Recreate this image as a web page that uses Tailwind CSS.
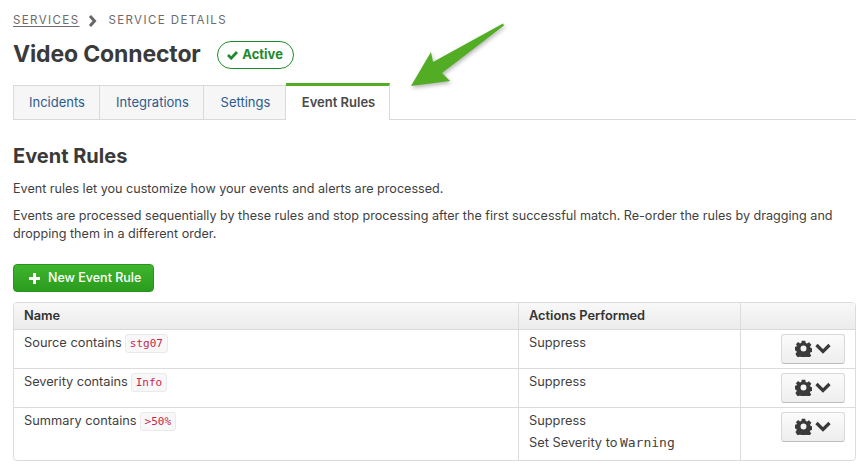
<!DOCTYPE html>
<html lang="en">
<head>
  <meta charset="UTF-8" />
  <title>Event Rules</title>
  <script src="https://cdn.jsdelivr.net/npm/@tailwindcss/browser@4"></script>
</head>
<body class="bg-white font-['Inter',sans-serif] text-[#3f3f3f] w-[865px] h-[474px] overflow-hidden relative">
  <div class="pl-[13px] pr-[9px] pt-[14px]">
    <!-- breadcrumb -->
    <div class="flex items-center h-[14px] text-[11.5px] tracking-[1.4px] text-[#6b6b6b]">
      <span class="underline underline-offset-2">SERVICES</span>
      <svg class="ml-[9px] mr-[10px]" width="10" height="12" viewBox="0 0 10 12"><path d="M2 1l4.500 5L2 11" fill="none" stroke="#666" stroke-width="3"/></svg>
      <span>SERVICE DETAILS</span>
    </div>
    <!-- title -->
    <div class="flex items-center mt-[8px] h-[36px]">
      <h1 class="text-[23px] font-bold text-[#3a3a3a] tracking-[-0.15px]">Video Connector</h1>
      <span class="ml-[16px] mt-[2px] flex items-center h-[28px] w-[77px] justify-center gap-[4px] border border-[#1f8a2c] rounded-full text-[13px] font-bold text-[#1f8a2c]">
        <svg width="11" height="10" viewBox="0 0 11 10"><path d="M1 5l3.200 3.200L10 2" fill="none" stroke="#1f8a2c" stroke-width="2.800"/></svg>
        Active
      </span>
    </div>
    <!-- tabs -->
    <div class="flex h-[37px] mt-[11px] border-b border-[#d9d9d9] text-[13px]">
      <div class="mt-[2px] h-[35px] pl-[1px] flex items-center justify-center w-[87px] bg-[#f6f6f6] border border-[#d9d9d9] text-[#2f5a8c]">Incidents</div>
      <div class="mt-[2px] h-[35px] pl-[2px] flex items-center justify-center w-[104px] bg-[#f6f6f6] border border-l-0 border-[#d9d9d9] text-[#2f5a8c]">Integrations</div>
      <div class="mt-[2px] h-[35px] pl-[2px] flex items-center justify-center w-[82px] bg-[#f6f6f6] border border-l-0 border-[#d9d9d9] text-[#2f5a8c]">Settings</div>
      <div class="h-[37px] pl-[2px] flex items-center justify-center w-[104px] bg-white border-t-[3px] border-t-[#52ad25] border-r border-r-[#d9d9d9] font-semibold text-[#4a4a4a] -mb-px">Event Rules</div>
    </div>
    <!-- content -->
    <h2 class="mt-[23px] text-[20px] leading-[26px] font-bold text-[#3a3a3a]">Event Rules</h2>
    <p class="mt-[11px] text-[12.6px] leading-[18px]">Event rules let you customize how your events and alerts are processed.</p>
    <p class="mt-[9px] text-[12.6px] leading-[18px] w-[835px]">Events are processed sequentially by these rules and stop processing after the first successful match. Re-order the rules by dragging and dropping them in a different order.</p>
    <button class="mt-[21px] flex items-center h-[28px] w-[141px] pl-[15px] gap-[8px] rounded-[4px] bg-gradient-to-b from-[#3fb52d] to-[#2a9c1e] border border-[#2b9220] text-white text-[12.5px] font-medium">
      <svg width="11" height="11" viewBox="0 0 11 11"><path d="M5.500 0v11M0 5.500h11" stroke="#fff" stroke-width="3"/></svg>
      New Event Rule
    </button>
    <!-- table -->
    <div class="mt-[10px] w-[843px] border border-[#dcdcdc] rounded-[4px] text-[12.8px] overflow-hidden">
      <div class="grid grid-cols-[504px_222px_1fr] h-[27px] bg-gradient-to-b from-[#f8f8f8] to-[#ececec] border-b border-[#d9d9d9] font-semibold text-[#333]">
        <div class="pl-[10px] flex items-center">Name</div>
        <div class="pl-[10px] flex items-center border-l border-[#dcdcdc]">Actions Performed</div>
        <div class="border-l border-[#dcdcdc]"></div>
      </div>
      <div class="grid grid-cols-[504px_222px_1fr] h-[39px] border-b border-[#dcdcdc]">
        <div class="pl-[10px] pt-[4px] flex items-start gap-[3px]">
          <span class="leading-[18px]">Source contains</span>
          <code class="px-[4px] h-[19px] leading-[17px] bg-[#f9f8f8] border border-[#eaeaea] rounded-[3px] font-['DejaVu_Sans_Mono',monospace] text-[11px] text-[#c7254e]">stg07</code>
        </div>
        <div class="pl-[10px] pt-[4px] leading-[18px] border-l border-[#dcdcdc]">Suppress</div>
        <div class="pt-[4px] pl-[40px] border-l border-[#dcdcdc]">
          <button class="flex items-center justify-center gap-[3px] w-[64px] h-[30px] pb-[2px] rounded-[3px] bg-gradient-to-b from-[#fbfbfb] to-[#eeeeee] border border-[#d9d9d9] border-b-[#bdbdbd]">
            <svg width="17" height="17" viewBox="0 0 24 24"><path fill="#3a3a3a" fill-rule="evenodd" d="M9.500 1h5l.6 3.200 1.900.8 2.700-1.900 3.500 3.500-1.900 2.700.8 1.900 3 .6v5l-3.200.6-.8 1.900 1.900 2.700-3.500 3.500-2.700-1.900-1.900.8-.6 2.900h-5l-.6-3.200-1.900-.8-2.700 1.900L.6 19.800l1.900-2.700-.8-1.900-2.700-.6v-5l3-.6.8-1.900L.9 6.400l3.500-3.500 2.700 1.900 1.900-.8z M12 7.800a4.200 4.200 0 1 0 0 8.400a4.200 4.200 0 0 0 0-8.400z"/></svg>
            <svg width="16" height="11" viewBox="0 0 16 11"><path d="M1.500 2l6.500 6.500L14.500 2" fill="none" stroke="#3a3a3a" stroke-width="3.200"/></svg>
          </button>
        </div>
      </div>
      <div class="grid grid-cols-[504px_222px_1fr] h-[39px] border-b border-[#dcdcdc]">
        <div class="pl-[10px] pt-[4px] flex items-start gap-[3px]">
          <span class="leading-[18px] tracking-[-0.05px]">Severity contains</span>
          <code class="px-[4px] h-[19px] leading-[17px] bg-[#f9f8f8] border border-[#eaeaea] rounded-[3px] font-['DejaVu_Sans_Mono',monospace] text-[11px] text-[#c7254e]">Info</code>
        </div>
        <div class="pl-[10px] pt-[4px] leading-[18px] border-l border-[#dcdcdc]">Suppress</div>
        <div class="pt-[4px] pl-[40px] border-l border-[#dcdcdc]">
          <button class="flex items-center justify-center gap-[3px] w-[64px] h-[30px] pb-[2px] rounded-[3px] bg-gradient-to-b from-[#fbfbfb] to-[#eeeeee] border border-[#d9d9d9] border-b-[#bdbdbd]">
            <svg width="17" height="17" viewBox="0 0 24 24"><path fill="#3a3a3a" fill-rule="evenodd" d="M9.500 1h5l.6 3.200 1.900.8 2.700-1.900 3.500 3.500-1.900 2.700.8 1.900 3 .6v5l-3.200.6-.8 1.900 1.900 2.700-3.500 3.500-2.700-1.900-1.900.8-.6 2.900h-5l-.6-3.200-1.900-.8-2.700 1.900L.6 19.800l1.900-2.700-.8-1.900-2.700-.6v-5l3-.6.8-1.900L.9 6.400l3.500-3.500 2.700 1.900 1.900-.8z M12 7.800a4.200 4.200 0 1 0 0 8.400a4.200 4.200 0 0 0 0-8.400z"/></svg>
            <svg width="16" height="11" viewBox="0 0 16 11"><path d="M1.500 2l6.500 6.500L14.500 2" fill="none" stroke="#3a3a3a" stroke-width="3.200"/></svg>
          </button>
        </div>
      </div>
      <div class="grid grid-cols-[504px_222px_1fr] h-[52px]">
        <div class="pl-[10px] pt-[4px] flex items-start gap-[3px]">
          <span class="leading-[18px]">Summary contains</span>
          <code class="px-[4px] h-[19px] leading-[17px] bg-[#f9f8f8] border border-[#eaeaea] rounded-[3px] font-['DejaVu_Sans_Mono',monospace] text-[11px] text-[#c7254e]">&gt;50%</code>
        </div>
        <div class="pl-[10px] pt-[4px] leading-[18px] border-l border-[#dcdcdc]">
          <div>Suppress</div>
          <div class="mt-[4px]">Set Severity to <span class="-ml-[1px] font-['DejaVu_Sans_Mono',monospace] text-[13px]">Warning</span></div>
        </div>
        <div class="pt-[4px] pl-[40px] border-l border-[#dcdcdc]">
          <button class="flex items-center justify-center gap-[3px] w-[64px] h-[30px] pb-[2px] rounded-[3px] bg-gradient-to-b from-[#fbfbfb] to-[#eeeeee] border border-[#d9d9d9] border-b-[#bdbdbd]">
            <svg width="17" height="17" viewBox="0 0 24 24"><path fill="#3a3a3a" fill-rule="evenodd" d="M9.500 1h5l.6 3.200 1.900.8 2.700-1.900 3.500 3.500-1.900 2.700.8 1.900 3 .6v5l-3.200.6-.8 1.900 1.900 2.700-3.500 3.500-2.700-1.900-1.900.8-.6 2.900h-5l-.6-3.200-1.900-.8-2.700 1.900L.6 19.800l1.900-2.700-.8-1.900-2.700-.6v-5l3-.6.8-1.900L.9 6.400l3.500-3.500 2.700 1.900 1.900-.8z M12 7.800a4.200 4.200 0 1 0 0 8.400a4.200 4.200 0 0 0 0-8.400z"/></svg>
            <svg width="16" height="11" viewBox="0 0 16 11"><path d="M1.500 2l6.500 6.500L14.500 2" fill="none" stroke="#3a3a3a" stroke-width="3.200"/></svg>
          </button>
        </div>
      </div>
    </div>
  </div>
  <!-- annotation arrow -->
  <svg class="absolute left-[405px] top-[18px] drop-shadow-[1px_2px_2px_rgba(0,0,0,0.3)]" width="105" height="72" viewBox="405 18 105 72">
    <path fill="#52ad25" d="M503 23.500L433 62L431 52L411 86L450 81L442 73L504 25.500Z" />
  </svg>
</body>
</html>
